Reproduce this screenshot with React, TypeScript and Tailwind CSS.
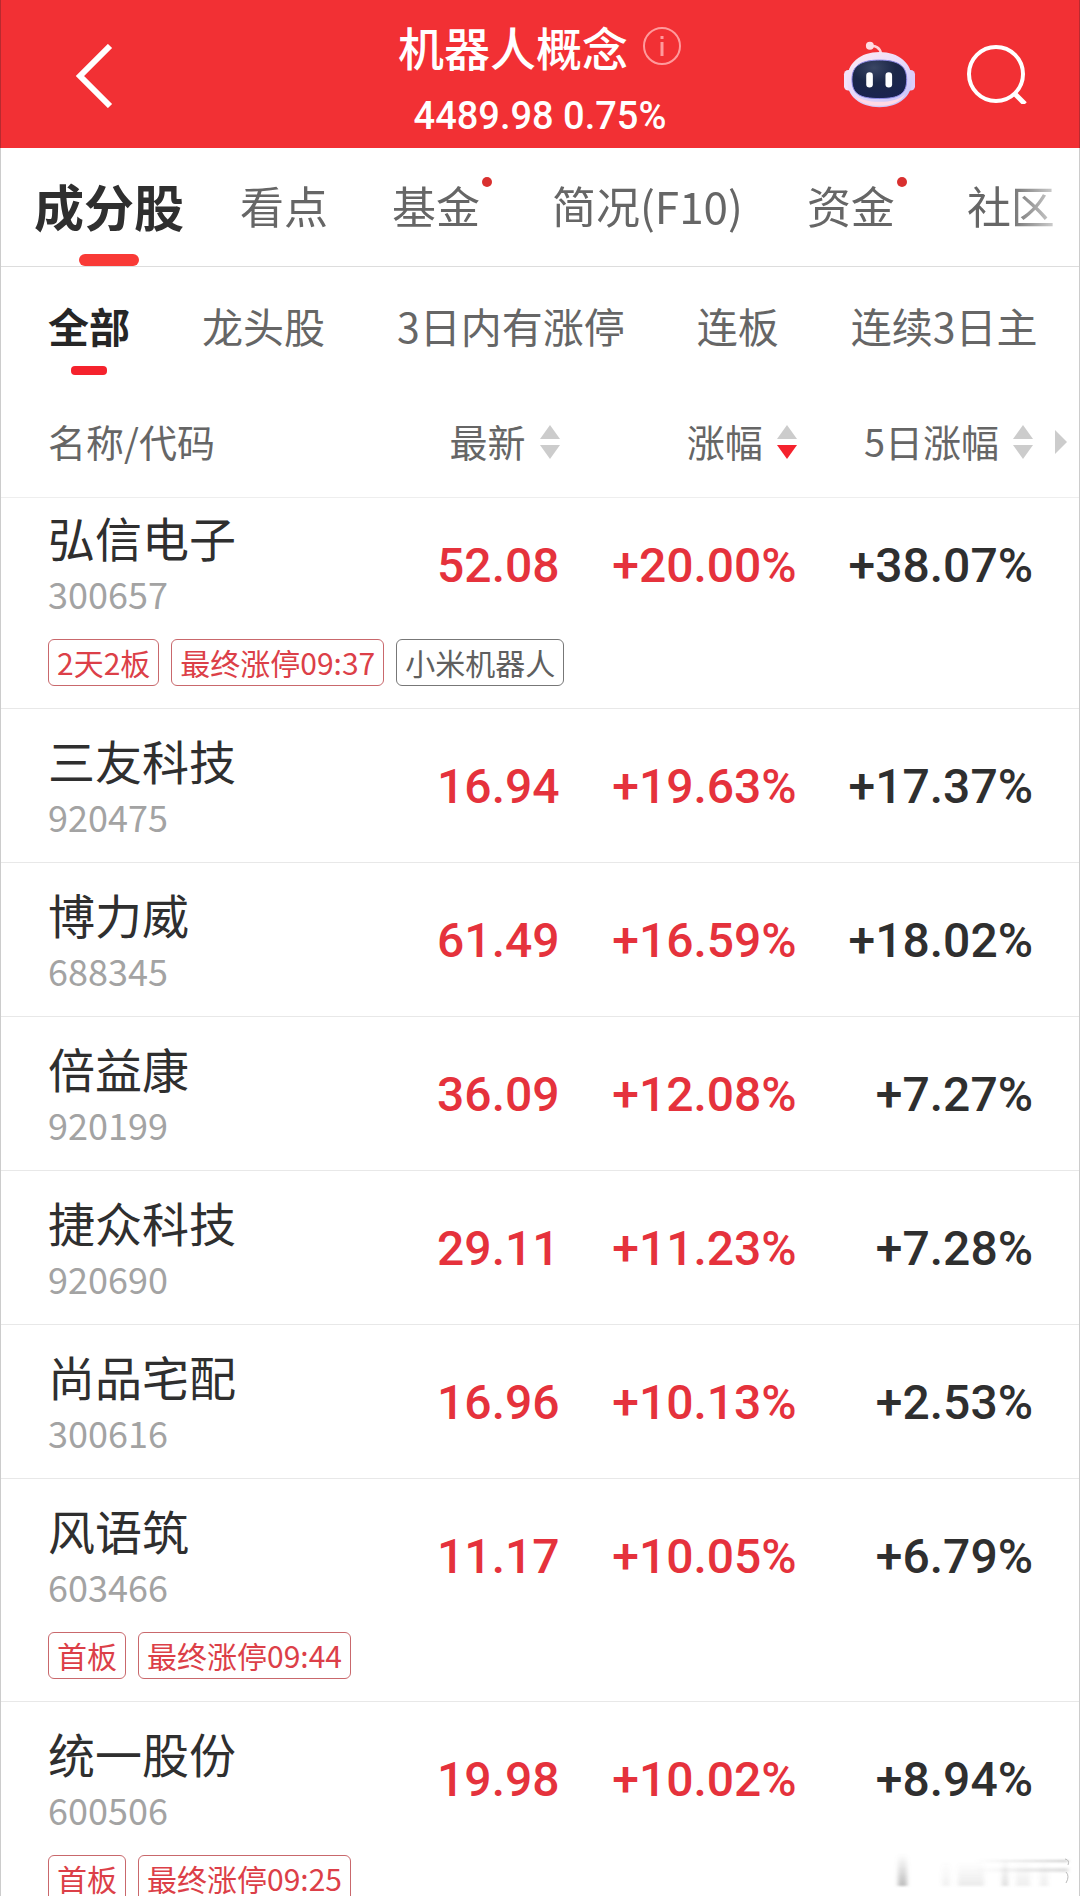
import React, { useState } from 'react';
import clsx from 'clsx';

type Tag = { label: string; tone: 'red' | 'gray' };

type Stock = {
  name: string;
  code: string;
  price: string;
  change: string;
  fiveDay: string;
  tags?: Tag[];
};

const TABS = [
  { label: '成分股' },
  { label: '看点' },
  { label: '基金', dot: true },
  { label: '简况(F10)' },
  { label: '资金', dot: true },
  { label: '社区' },
];

const FILTERS = ['全部', '龙头股', '3日内有涨停', '连板', '连续3日主'];

const COLUMNS = ['最新', '涨幅', '5日涨幅'];

const STOCKS: Stock[] = [
  {
    name: '弘信电子',
    code: '300657',
    price: '52.08',
    change: '+20.00%',
    fiveDay: '+38.07%',
    tags: [
      { label: '2天2板', tone: 'red' },
      { label: '最终涨停09:37', tone: 'red' },
      { label: '小米机器人', tone: 'gray' },
    ],
  },
  { name: '三友科技', code: '920475', price: '16.94', change: '+19.63%', fiveDay: '+17.37%' },
  { name: '博力威', code: '688345', price: '61.49', change: '+16.59%', fiveDay: '+18.02%' },
  { name: '倍益康', code: '920199', price: '36.09', change: '+12.08%', fiveDay: '+7.27%' },
  { name: '捷众科技', code: '920690', price: '29.11', change: '+11.23%', fiveDay: '+7.28%' },
  { name: '尚品宅配', code: '300616', price: '16.96', change: '+10.13%', fiveDay: '+2.53%' },
  {
    name: '风语筑',
    code: '603466',
    price: '11.17',
    change: '+10.05%',
    fiveDay: '+6.79%',
    tags: [
      { label: '首板', tone: 'red' },
      { label: '最终涨停09:44', tone: 'red' },
    ],
  },
  {
    name: '统一股份',
    code: '600506',
    price: '19.98',
    change: '+10.02%',
    fiveDay: '+8.94%',
    tags: [
      { label: '首板', tone: 'red' },
      { label: '最终涨停09:25', tone: 'red' },
    ],
  },
];

const RobotIcon: React.FC = () => (
  <svg viewBox="68 30 220 204" className="h-[68px] w-[73px]" aria-hidden="true">
    <defs>
      <linearGradient id="shell" x1="0" y1="0" x2="0.7" y2="1">
        <stop offset="0" stopColor="#ffe9f0" />
        <stop offset="0.5" stopColor="#e9dcfb" />
        <stop offset="1" stopColor="#c9c5fa" />
      </linearGradient>
      <radialGradient id="visor" cx="0.4" cy="0.2" r="0.8">
        <stop offset="0" stopColor="#3a4664" />
        <stop offset="0.5" stopColor="#1c2748" />
        <stop offset="1" stopColor="#1a2350" />
      </radialGradient>
    </defs>
    <path d="M149 48 C166 46 180 52 182 70" fill="none" stroke="#ffd3da" strokeWidth="8" />
    <circle cx="149" cy="47" r="12" fill="#ffdce3" />
    <rect x="71" y="120" width="30" height="62" rx="13" fill="#f3e2fa" />
    <rect x="255" y="120" width="30" height="62" rx="13" fill="#dccdfa" />
    <path
      d="M178 66 C236 66 276 100 276 150 C276 200 236 232 178 232 C120 232 80 200 80 150 C80 100 120 66 178 66Z"
      fill="url(#shell)"
    />
    <path d="M100 192 C122 240 234 240 256 192 C228 224 128 224 100 192Z" fill="#ffd9e6" />
    <path
      d="M178 90 C232 90 260 106 260 148 C260 192 238 206 178 206 C118 206 95 192 95 148 C95 106 124 90 178 90Z"
      fill="url(#visor)"
      stroke="#8f8be8"
      strokeWidth="3"
    />
    <rect x="138" y="127" width="20" height="46" rx="10" fill="#fff" />
    <rect x="196" y="127" width="20" height="46" rx="10" fill="#fff" />
  </svg>
);

const SortArrows: React.FC<{ active?: boolean }> = ({ active }) => (
  <svg viewBox="0 0 20 34" className="h-[34px] w-5" aria-hidden="true">
    <path d="M10 0L20 14H0Z" fill="#cccccc" />
    <path d="M0 20H20L10 34Z" fill={active ? '#f5222d' : '#cccccc'} />
  </svg>
);

const Header: React.FC = () => (
  <header className="grid h-[148px] grid-cols-[1fr_auto_1fr] items-center border-x border-[#b92a2f] bg-[#f23034] text-white">
    <button type="button" aria-label="返回" className="ml-[74px] mt-1 w-10">
      <svg viewBox="0 0 40 64" className="h-16 w-10" fill="none" stroke="currentColor" strokeWidth="6">
        <path d="M35 2L5 32L35 62" />
      </svg>
    </button>
    <div className="flex flex-col items-center pt-3">
      <h1 className="flex items-center gap-[14px] text-[46px] font-medium leading-[68px]">
        机器人概念
        <button type="button" aria-label="说明">
          <svg viewBox="0 0 40 40" className="size-10" fill="none" stroke="#ff9a9c" strokeWidth="2">
            <circle cx="20" cy="20" r="18" />
            <path d="M20 16V30M20 10V13" strokeWidth="3" />
          </svg>
        </button>
      </h1>
      <p className="pt-1 font-['Roboto',sans-serif] text-[38px] font-medium leading-[64px]">4489.98 0.75%</p>
    </div>
    <div className="mr-[52px] flex items-center justify-end gap-[51px]">
      <button type="button" aria-label="智能助手">
        <RobotIcon />
      </button>
      <button type="button" aria-label="搜索">
        <svg viewBox="0 0 60 60" className="size-[60px]" fill="none" stroke="currentColor" strokeWidth="4">
          <circle cx="29" cy="30" r="27" />
          <path d="M47 49L58 60" strokeWidth="5" />
        </svg>
      </button>
    </div>
  </header>
);

const StockRows: React.FC<{ stock: Stock; first: boolean }> = ({ stock, first }) => {
  const cell = clsx(
    "text-right font-['Roboto',sans-serif] text-[48px] font-medium",
    first ? 'pb-1' : 'pt-1'
  );

  return (
    <tbody className="border-b border-[#e8e8e8]">
      <tr>
        <td className={clsx('pb-[18px] pl-[47px]', first ? 'pt-[11px]' : 'pt-[23px]')}>
          <div className="whitespace-nowrap text-[47px] leading-14 text-[#2f2f2f]">{stock.name}</div>
          <div className="text-[36px] leading-14 text-[#a3a3a3]">{stock.code}</div>
        </td>
        <td className={clsx(cell, 'pr-0.5 text-[#e5323c]')}>{stock.price}</td>
        <td className={clsx(cell, 'pr-0.5 text-[#e5323c]')}>{stock.change}</td>
        <td className={clsx(cell, 'pr-[46px] text-[#2f2f2f]')}>{stock.fiveDay}</td>
      </tr>
      {stock.tags && (
        <tr>
          <td colSpan={4} className="pb-[22px] pl-[47px]">
            <div className="flex gap-3">
              {stock.tags.map(tag => (
                <span
                  key={tag.label}
                  className={clsx(
                    'flex h-[47px] items-center rounded-md border px-2 text-[30px] leading-none',
                    tag.tone === 'red' ? 'border-[#c9686c] text-[#dc3f48]' : 'border-[#777777] text-[#5f5f5f]'
                  )}
                >
                  {tag.label}
                </span>
              ))}
            </div>
          </td>
        </tr>
      )}
    </tbody>
  );
};

const App: React.FC = () => {
  const [tab, setTab] = useState('成分股');
  const [filter, setFilter] = useState('全部');
  const [sortBy, setSortBy] = useState('涨幅');

  return (
    <div className="relative h-screen overflow-hidden bg-white font-['Noto_Sans_CJK_SC',sans-serif]">
      <Header />
      <main className="border-x border-[#cccccc]">
        <nav className="border-b border-[#dddddd]">
          <div className="mr-5 flex gap-16 overflow-hidden pl-[33px] [mask-image:linear-gradient(to_right,black_95%,rgba(0,0,0,0.25))]">
            {TABS.map(({ label, dot }) => (
              <button
                key={label}
                type="button"
                onClick={() => setTab(label)}
                className={clsx(
                  'relative flex h-[118px] shrink-0 items-center whitespace-nowrap pb-1',
                  dot && 'pr-2',
                  tab === label ? '-mr-2 text-[50px] font-bold text-[#2f2f2f]' : 'text-[44px] text-[#666666]'
                )}
              >
                {label}
                {dot && <span className="absolute -right-1 top-[29px] size-[10px] rounded-full bg-[#d9302f]" />}
                {tab === label && (
                  <span className="absolute bottom-0 left-1/2 h-3 w-[60px] -translate-x-1/2 rounded-full bg-[#f93a36]" />
                )}
              </button>
            ))}
          </div>
        </nav>

        <div className="flex gap-[72px] overflow-hidden pl-[47px]">
          {FILTERS.map(label => (
            <button
              key={label}
              type="button"
              onClick={() => setFilter(label)}
              className={clsx(
                'relative h-[121px] shrink-0 whitespace-nowrap pb-1 text-[41px]',
                filter === label ? 'font-bold text-[#262626]' : 'text-[#666666]'
              )}
            >
              {label}
              {filter === label && (
                <span className="absolute bottom-[13px] left-1/2 h-[9px] w-9 -translate-x-1/2 rounded bg-[#f5222d]" />
              )}
            </button>
          ))}
        </div>

        <table className="w-full table-fixed border-collapse">
          <thead>
            <tr className="h-[109px] border-b border-[#eeeeee] text-[38px] text-[#666666]">
              <th className="w-[30%] pb-1 pl-[47px] text-left font-normal">名称/代码</th>
              {COLUMNS.map((label, i) => (
                <th
                  key={label}
                  className={clsx('relative font-normal', i === 2 ? 'w-[26%] pr-[46px]' : 'w-[22%] pr-0.5')}
                >
                  <button
                    type="button"
                    onClick={() => setSortBy(label)}
                    className="flex w-full items-center justify-end gap-[14px] whitespace-nowrap"
                  >
                    <span className="pb-1">{label}</span>
                    <SortArrows active={sortBy === label} />
                  </button>
                  {i === 2 && (
                    <svg viewBox="0 0 12 24" className="absolute right-3 top-[42px] h-6 w-3" aria-hidden="true">
                      <path d="M0 0L12 12L0 24Z" fill="#cccccc" />
                    </svg>
                  )}
                </th>
              ))}
            </tr>
          </thead>
          {STOCKS.map((stock, i) => (
            <StockRows key={stock.code} stock={stock} first={i === 0} />
          ))}
        </table>
      </main>

      {/* faded smudge in the corner */}
      <svg viewBox="0 0 180 36" className="absolute bottom-2 right-2 h-9 w-[180px]" aria-hidden="true">
        <defs>
          <linearGradient id="bar" x1="0" y1="0" x2="0" y2="1">
            <stop offset="0" stopColor="#888" stopOpacity="0" />
            <stop offset="1" stopColor="#777" stopOpacity="0.5" />
          </linearGradient>
          <linearGradient id="streak" x1="0" y1="0" x2="1" y2="0">
            <stop offset="0.4" stopColor="#888" stopOpacity="0" />
            <stop offset="1" stopColor="#777" stopOpacity="0.4" />
          </linearGradient>
          <filter id="soft">
            <feGaussianBlur stdDeviation="2 1" />
          </filter>
        </defs>
        <g filter="url(#soft)">
          <rect x="6" y="2" width="9" height="32" fill="url(#bar)" />
          <rect x="50" y="10" width="8" height="24" fill="url(#bar)" opacity="0.2" />
          <rect x="66" y="10" width="26" height="24" fill="url(#bar)" opacity="0.3" />
          <rect x="110" y="6" width="6" height="28" fill="url(#bar)" opacity="0.5" />
          <rect x="124" y="10" width="14" height="24" fill="url(#bar)" opacity="0.25" />
          <rect x="148" y="10" width="8" height="24" fill="url(#bar)" opacity="0.25" />
          <rect x="20" y="8" width="156" height="2" fill="url(#streak)" />
          <rect x="20" y="16" width="156" height="4" fill="url(#streak)" opacity="0.6" />
        </g>
        <path d="M173 7Q178 8 176 13M174 20Q178 24 174 31" fill="none" stroke="#bbb" />
      </svg>
    </div>
  );
};

export default App;
